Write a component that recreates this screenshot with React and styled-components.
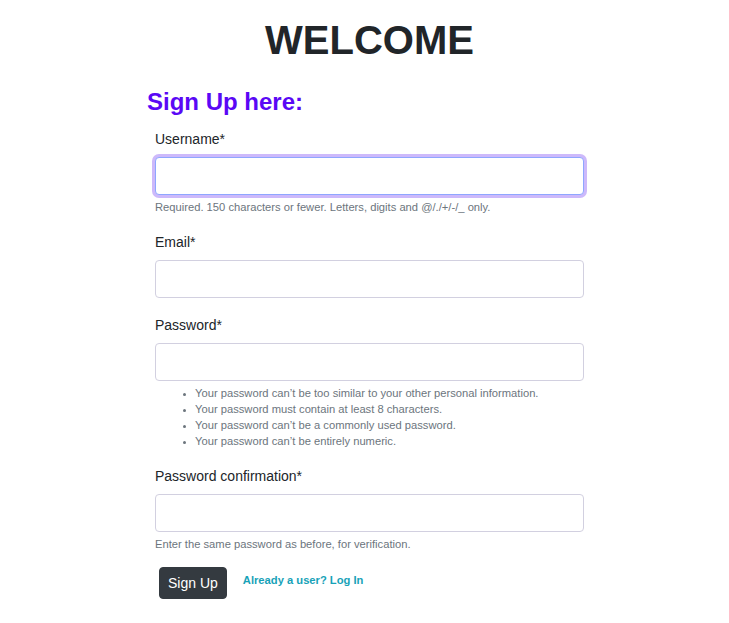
import React, { useState } from "react";
import styled, { createGlobalStyle } from "styled-components";

const GlobalStyle = createGlobalStyle`
  body {
    margin: 0;
    background: #fff;
    font-family: "Liberation Sans", Arial, sans-serif;
    color: #212529;
  }
  * {
    box-sizing: border-box;
  }
`;

const Page = styled.div`
  padding: 16px 0 20px 10px;
`;

const Title = styled.h1`
  margin: 0 0 23px;
  font-size: 40px;
  line-height: 48px;
  font-weight: 700;
  text-align: center;
  color: #212529;
`;

const Card = styled.div`
  width: 445px;
  margin: 0 auto;
`;

const Heading = styled.h2`
  margin: 0 0 13px;
  font-size: 24px;
  line-height: 29px;
  font-weight: 700;
  color: #5a08f5;
`;

const Form = styled.form`
  padding: 0 8px;
`;

const Group = styled.div`
  margin-bottom: ${(p) => (p.$last ? "15px" : "17px")};
`;

const Label = styled.label`
  display: block;
  margin-bottom: 7px;
  font-size: 14px;
  line-height: 21px;
`;

const Input = styled.input`
  display: block;
  width: 429px;
  height: 38px;
  padding: 6px 12px;
  font-size: 14px;
  font-family: inherit;
  color: #495057;
  background: #fff;
  border: 1px solid #d2d0e0;
  border-radius: 4px;
  outline: none;

  &.focused,
  &:focus {
    border-color: #8fa6ff;
    box-shadow: 0 0 0 3px #cdb9fb;
  }
`;

const Help = styled.small`
  display: block;
  margin-top: 4px;
  font-size: 11.2px;
  line-height: 16px;
  color: #6c757d;
`;

const Rules = styled.ul`
  margin: 4px 0 0;
  padding-left: 40px;
  font-size: 11.2px;
  line-height: 16px;
  color: #6c757d;

  li::marker {
    font-size: 9px;
  }
`;

const Actions = styled.div`
  display: flex;
  align-items: center;
  gap: 16px;
  padding-left: 4px;
`;

const Button = styled.button`
  padding: 5px 8px;
  font-family: inherit;
  font-size: 14px;
  line-height: 20px;
  color: #fff;
  background: #343a40;
  border: 1px solid #343a40;
  border-radius: 4px;
  cursor: pointer;
`;

const LoginLink = styled.a`
  margin-top: -6px;
  font-size: 11.2px;
  font-weight: 700;
  color: #17a2b8;
  text-decoration: none;
`;

const App = () => {
  const [form, setForm] = useState({
    username: "",
    email: "",
    password1: "",
    password2: "",
  });

  const change = (e) => setForm({ ...form, [e.target.name]: e.target.value });

  return (
    <Page>
      <GlobalStyle />
      <Title>WELCOME</Title>
      <Card>
        <Heading>Sign Up here:</Heading>
        <Form onSubmit={(e) => e.preventDefault()}>
          <Group>
            <Label htmlFor="id_username">Username*</Label>
            <Input
              className="focused"
              id="id_username"
              name="username"
              value={form.username}
              onChange={change}
            />
            <Help>Required. 150 characters or fewer. Letters, digits and @/./+/-/_ only.</Help>
          </Group>
          <Group>
            <Label htmlFor="id_email">Email*</Label>
            <Input id="id_email" name="email" type="email" value={form.email} onChange={change} />
          </Group>
          <Group>
            <Label htmlFor="id_password1">Password*</Label>
            <Input
              id="id_password1"
              name="password1"
              type="password"
              value={form.password1}
              onChange={change}
            />
            <Rules>
              <li>Your password can’t be too similar to your other personal information.</li>
              <li>Your password must contain at least 8 characters.</li>
              <li>Your password can’t be a commonly used password.</li>
              <li>Your password can’t be entirely numeric.</li>
            </Rules>
          </Group>
          <Group $last>
            <Label htmlFor="id_password2">Password confirmation*</Label>
            <Input
              id="id_password2"
              name="password2"
              type="password"
              value={form.password2}
              onChange={change}
            />
            <Help>Enter the same password as before, for verification.</Help>
          </Group>
          <Actions>
            <Button type="submit">Sign Up</Button>
            <LoginLink href="#">Already a user? Log In</LoginLink>
          </Actions>
        </Form>
      </Card>
    </Page>
  );
};

export default App;
